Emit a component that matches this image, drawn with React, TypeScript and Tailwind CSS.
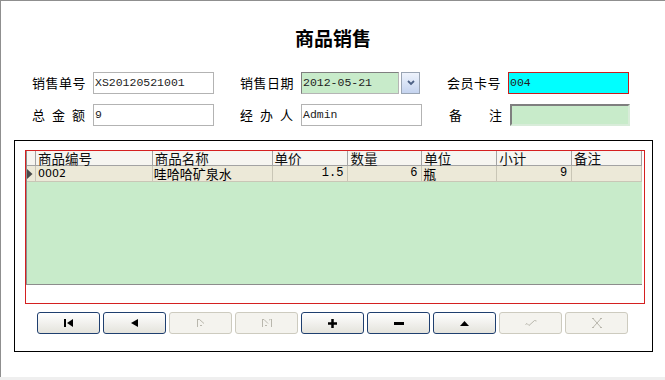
import React from 'react';

const cjk = "font-['Noto_Sans_CJK_SC',sans-serif]";
const mono = "font-['Liberation_Mono',monospace]";

const columns = [
  { title: '商品编号', w: 'w-[117px]' },
  { title: '商品名称', w: 'w-[120px]' },
  { title: '单价', w: 'w-[76px]' },
  { title: '数量', w: 'w-[74px]' },
  { title: '单位', w: 'w-[75px]' },
  { title: '小计', w: 'w-[75px]' },
  { title: '备注', w: 'w-[70px]' },
];

const NavButton: React.FC<{ disabled?: boolean; children: React.ReactNode }> = ({ disabled, children }) => (
  <div
    className={
      disabled
        ? 'w-[63px] h-[22px] rounded-[3px] border border-[#cdcbbf] bg-[#f4f3ee] flex items-center justify-center'
        : 'w-[63px] h-[22px] rounded-[3px] border border-[#1f3f6f] bg-gradient-to-b from-white to-[#e4e3dc] flex items-center justify-center'
    }
  >
    {children}
  </div>
);

const App: React.FC = () => {
  return (
    <div className={`w-[665px] h-[380px] bg-[#efefef] ${cjk} text-black`}>
      <div className="h-[377px] bg-white border-t border-l border-[#8f8f8f]">
        {/* Title */}
        <div className="pt-[26px] h-[48px] text-center text-[19px] leading-[22px] font-bold">商品销售</div>

        {/* Form rows */}
        <div className="mt-[23px] pl-[31px] flex flex-col gap-[10px]">
          <div className="flex items-center h-[22px] text-[13px]">
            <span className="w-[54px] tracking-[0.5px]">销售单号</span>
            <div className={`ml-[7px] w-[121px] h-[22px] border border-[#b3b3b3] bg-white px-[1px] text-[11.5px] leading-[20px] text-[#222] ${mono}`}>XS20120521001</div>
            <span className="ml-[26px] w-[54px] tracking-[0.5px]">销售日期</span>
            <div className={`ml-[7px] w-[98px] h-[22px] border border-[#b5b5b5] border-t-[#7f7f7f] border-l-[#7f7f7f] bg-[#c8ebca] px-[1px] text-[11.5px] leading-[20px] text-[#222] ${mono}`}>2012-05-21</div>
            <div className="ml-[2px] w-[19px] h-[22px] border border-[#9aa5b4] bg-gradient-to-b from-[#eef3fc] to-[#c5d4ef] flex items-center justify-center">
              <svg width="8" height="6" viewBox="0 0 8 6">
                <path d="M1 1 L4 4 L7 1" fill="none" stroke="#4d6185" strokeWidth="1.8" />
              </svg>
            </div>
            <span className="ml-[27px] w-[54px] tracking-[0.5px]">会员卡号</span>
            <div className={`ml-[7px] w-[121px] h-[22px] border border-[#c81e1e] bg-[#00ffff] px-[1px] text-[11.5px] leading-[20px] text-[#222] ${mono}`}>004</div>
          </div>
          <div className="flex items-center h-[22px] text-[13px]">
            <span className="w-[54px] flex justify-between pr-[1px]"><span>总</span><span>金</span><span>额</span></span>
            <div className={`ml-[7px] w-[121px] h-[22px] border border-[#b3b3b3] bg-white px-[1px] text-[11.5px] leading-[20px] text-[#222] ${mono}`}>9</div>
            <span className="ml-[26px] w-[54px] flex justify-between pr-[1px]"><span>经</span><span>办</span><span>人</span></span>
            <div className={`ml-[7px] w-[121px] h-[22px] border border-[#b3b3b3] bg-white px-[1px] text-[11.5px] leading-[20px] text-[#222] ${mono}`}>Admin</div>
            <span className="ml-[27px] w-[54px] flex justify-between pr-[1px]"><span>备</span><span>注</span></span>
            <div className="ml-[7px] w-[120px] h-[22px] border-[2px] border-[#d8ecd9] border-t-[#7f7f7f] border-l-[#7f7f7f] bg-[#c8ebca]" />
          </div>
        </div>

        {/* Grid frame */}
        <div className="mt-[14px] ml-[13px] w-[639px] h-[212px] border border-black">
          <div className="mt-[9px] ml-[10px] w-[620px] h-[154px] border border-[#d42020]">
            <div className="w-[616px] h-[134px] bg-[#c8ebca] border-l border-b border-[#8c8c8c]">
              {/* Header */}
              <div className="flex h-[15px] bg-[#f6f5f0] border-b border-[#a3a3a3] text-[13.5px] leading-[14px] text-[#111]">
                <div className="w-[9px] border-r border-[#a3a3a3]" />
                {columns.map((c) => (
                  <div key={c.title} className={`${c.w} border-r border-[#a3a3a3] pl-[2px] whitespace-nowrap`}>
                    {c.title}
                  </div>
                ))}
              </div>
              {/* Data row */}
              <div className="flex items-center h-[16px] bg-[#ece9d8] border-b border-[#c9c6b6] text-[13px] leading-[15px]">
                <div className="w-[9px] h-full border-r border-[#c9c6b6] flex items-center">
                  <svg width="6" height="10" viewBox="0 0 6 10">
                    <path d="M0 0 L5.5 5 L0 10 Z" fill="#4a4a4a" />
                  </svg>
                </div>
                <div className="w-[117px] h-full border-r border-[#c9c6b6] pl-[2px] text-[11px] font-['DejaVu_Sans',sans-serif]">0002</div>
                <div className="w-[120px] h-full border-r border-[#c9c6b6] pl-[1px]">哇哈哈矿泉水</div>
                <div className={`w-[76px] h-full border-r border-[#c9c6b6] pr-[4px] text-right text-[12px] ${mono}`}>1.5</div>
                <div className={`w-[74px] h-full border-r border-[#c9c6b6] pr-[4px] text-right text-[12px] ${mono}`}>6</div>
                <div className="w-[75px] h-full border-r border-[#c9c6b6] pl-[1px]">瓶</div>
                <div className={`w-[75px] h-full border-r border-[#c9c6b6] pr-[4px] text-right text-[12px] ${mono}`}>9</div>
                <div className="w-[70px] h-full border-r border-[#c9c6b6]" />
              </div>
            </div>
          </div>

          {/* Navigator buttons */}
          <div className="mt-[8px] ml-[22px] flex gap-[3px]">
            <NavButton>
              <svg width="9" height="8" viewBox="0 0 9 8">
                <rect x="0" y="0" width="2" height="8" fill="#000" />
                <path d="M9 0 L3 4 L9 8 Z" fill="#000" />
              </svg>
            </NavButton>
            <NavButton>
              <svg width="7" height="8" viewBox="0 0 7 8">
                <path d="M7 0 L0 4 L7 8 Z" fill="#000" />
              </svg>
            </NavButton>
            <NavButton disabled>
              <svg width="8" height="8" viewBox="0 0 8 8">
                <path d="M0.5 0 V8 M0.5 0.5 H2.5 L7 4.5 M3 6.5 L5 6.5" fill="none" stroke="#b9b7ad" strokeWidth="1" />
              </svg>
            </NavButton>
            <NavButton disabled>
              <svg width="10" height="8" viewBox="0 0 10 8">
                <path d="M0.5 0 V8 M0.5 0.5 H2 L6 4.5 M9.5 0 V8 M7 1 L8.5 0.5 M3 6.5 L5 6.5" fill="none" stroke="#b9b7ad" strokeWidth="1" />
              </svg>
            </NavButton>
            <NavButton>
              <svg width="9" height="9" viewBox="0 0 9 9">
                <path d="M3.25 0 H5.75 V3.25 H9 V5.75 H5.75 V9 H3.25 V5.75 H0 V3.25 H3.25 Z" fill="#000" />
              </svg>
            </NavButton>
            <NavButton>
              <svg width="10" height="3" viewBox="0 0 10 3">
                <rect x="0" y="0" width="10" height="3" fill="#000" />
              </svg>
            </NavButton>
            <NavButton>
              <svg width="9" height="5" viewBox="0 0 9 5">
                <path d="M0 5 L4.5 0 L9 5 Z" fill="#000" />
              </svg>
            </NavButton>
            <NavButton disabled>
              <svg width="12" height="7" viewBox="0 0 12 7">
                <path d="M0.5 4.5 L2 3.5 L4 5.5 L9.5 0.5 L11.5 1" fill="none" stroke="#b9b7ad" strokeWidth="1" />
              </svg>
            </NavButton>
            <NavButton disabled>
              <svg width="10" height="10" viewBox="0 0 10 10">
                <path d="M1 0.5 L9 9.5 M9 0.5 L1 9.5 M0 0.5 H2 M8 0.5 H10 M0 9.5 H2 M8 9.5 H10" fill="none" stroke="#b9b7ad" strokeWidth="1" />
              </svg>
            </NavButton>
          </div>
        </div>
      </div>
    </div>
  );
};

export default App;
